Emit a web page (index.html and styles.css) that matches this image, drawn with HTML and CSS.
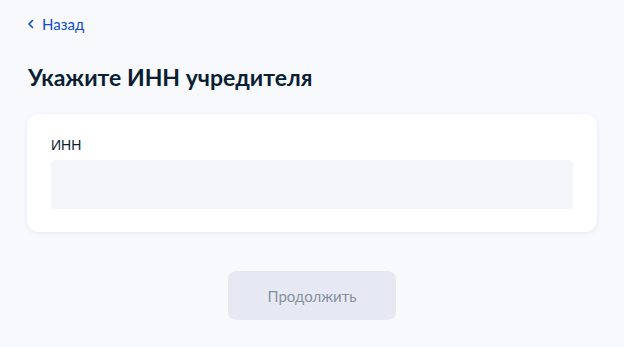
FILE: index.html
```html
<!DOCTYPE html>
<html lang="ru">
<head>
<meta charset="utf-8">
<link rel="stylesheet" href="styles.css">
</head>
<body>
<div class="page">
  <a class="back" href="#">
    <svg class="chev" width="8" height="10" viewBox="0 0 8 10"><path d="M5.5 1.5 L2 5 L5.5 8.5" fill="none" stroke="#0d4cd3" stroke-width="1.6" stroke-linecap="round" stroke-linejoin="round"/></svg>
    <span>Назад</span>
  </a>
  <h1 class="title">Укажите ИНН учредителя</h1>
  <div class="card">
    <label class="label">ИНН</label>
    <div class="input"></div>
  </div>
  <div class="actions">
    <button class="btn" disabled>Продолжить</button>
  </div>
</div>
</body>
</html>
```
FILE: styles.css
```css
html, body {
  margin: 0;
  padding: 0;
  background: #f8f9fd;
}
body {
  font-family: Lato, "Noto Sans", sans-serif;
  color: #0b1f33;
}
.page {
  padding: 14px 27px 0 27px;
  display: flex;
  flex-direction: column;
}
.back {
  display: flex;
  align-items: center;
  gap: 7px;
  color: #0d4cd3;
  text-decoration: none;
  font-size: 15px;
  height: 20px;
}
.chev { display: block; }
.title {
  margin: 28px 0 0 1px;
  font-size: 23px;
  font-weight: 700;
  line-height: 30px;
  color: #0b1f33;
}
.card {
  margin-top: 22px;
  background: #fff;
  border-radius: 12px;
  box-shadow: 0 1px 4px rgba(110, 130, 180, 0.14);
  padding: 23px 24px 23px 24px;
  display: flex;
  flex-direction: column;
}
.label {
  font-family: "Liberation Sans", Arial, sans-serif;
  font-size: 14px;
  line-height: 16px;
  color: #0b1f33;
}
.input {
  margin-top: 7px;
  height: 49px;
  background: #f5f6fa;
  border-radius: 4px;
}
.actions {
  display: flex;
  justify-content: center;
  margin-top: 39px;
}
.btn {
  width: 168px;
  height: 49px;
  border: none;
  border-radius: 8px;
  background: #e6e9f3;
  color: #86909c;
  font-family: Lato, sans-serif;
  font-size: 15px;
}
```
